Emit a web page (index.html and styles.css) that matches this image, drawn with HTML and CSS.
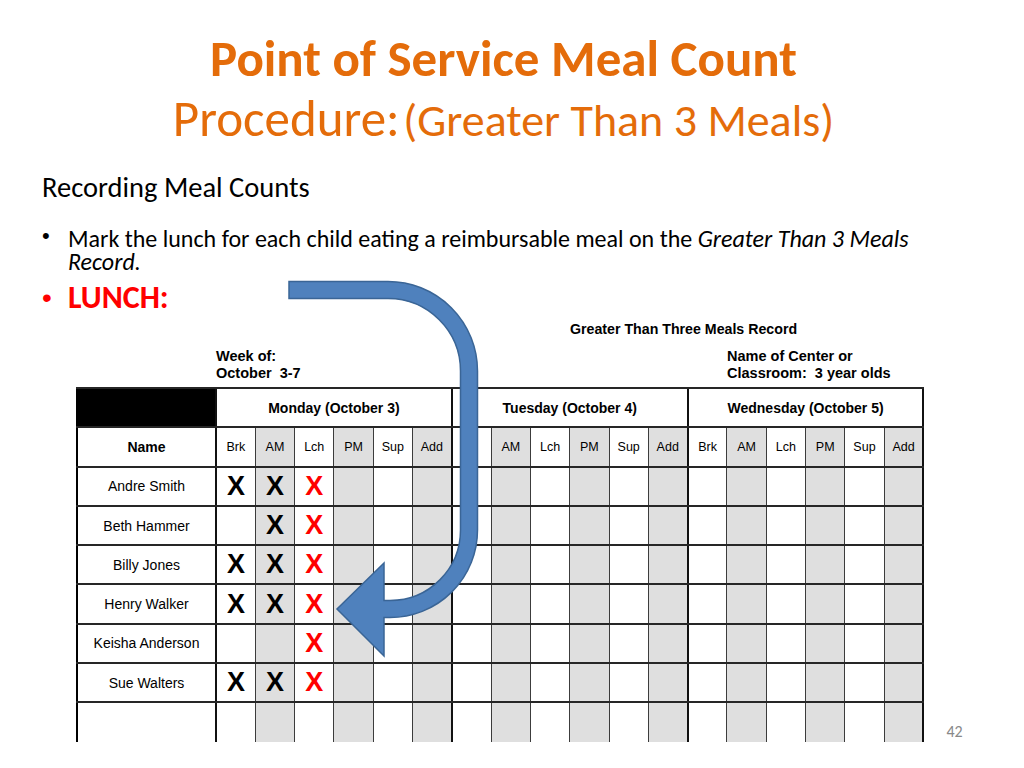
FILE: index.html
```html
<!DOCTYPE html>
<html>
<head>
<meta charset="utf-8">
<link rel="stylesheet" href="styles.css">
</head>
<body>
<div class="slide">
  <header class="title">
    <div class="t1">Point of Service Meal Count</div>
    <div class="t2"><span class="proc">Procedure:</span> <span class="sub">(Greater Than 3 Meals)</span></div>
  </header>
  <div class="content">
    <p class="lead">Recording Meal Counts</p>
    <ul class="bullets">
      <li class="b1"><span class="dot">•</span><span class="txt">Mark the lunch for each child eating a reimbursable meal on the <em>Greater Than 3 Meals</em> <em>Record.</em></span></li>
      <li class="b2"><span class="dot">•</span><span class="txt">LUNCH:</span></li>
    </ul>
  </div>
  <div class="record-row">
    <section class="record">
      <div class="rec-title">Greater Than Three Meals Record</div>
      <div class="rec-meta">
        <div class="week">Week of:<br>October&nbsp; 3-7</div>
        <div class="center">Name of Center or<br>Classroom:&nbsp; 3 year olds</div>
      </div>
      <table class="meals">
        <colgroup><col class="cn"></colgroup>
        <colgroup class="day"><col><col class="g"><col><col class="g"><col><col class="g"></colgroup>
        <colgroup class="day"><col><col class="g"><col><col class="g"><col><col class="g"></colgroup>
        <colgroup class="day"><col><col class="g"><col><col class="g"><col><col class="g"></colgroup>
        <thead>
          <tr class="days">
            <th class="blk"></th>
            <th colspan="6">Monday (October 3)</th>
            <th colspan="6">Tuesday (October 4)</th>
            <th colspan="6">Wednesday (October 5)</th>
          </tr>
          <tr class="meal-h">
            <th class="namehd">Name</th>
            <td>Brk</td><td>AM</td><td>Lch</td><td>PM</td><td>Sup</td><td>Add</td>
            <td></td><td>AM</td><td>Lch</td><td>PM</td><td>Sup</td><td>Add</td>
            <td>Brk</td><td>AM</td><td>Lch</td><td>PM</td><td>Sup</td><td>Add</td>
          </tr>
        </thead>
        <tbody>
          <tr>
            <td class="nm">Andre Smith</td>
            <td><span class="x">X</span></td><td><span class="x">X</span></td><td><span class="x r">X</span></td><td></td><td></td><td></td>
            <td></td><td></td><td></td><td></td><td></td><td></td>
            <td></td><td></td><td></td><td></td><td></td><td></td>
          </tr>
          <tr>
            <td class="nm">Beth Hammer</td>
            <td></td><td><span class="x">X</span></td><td><span class="x r">X</span></td><td></td><td></td><td></td>
            <td></td><td></td><td></td><td></td><td></td><td></td>
            <td></td><td></td><td></td><td></td><td></td><td></td>
          </tr>
          <tr>
            <td class="nm">Billy Jones</td>
            <td><span class="x">X</span></td><td><span class="x">X</span></td><td><span class="x r">X</span></td><td></td><td></td><td></td>
            <td></td><td></td><td></td><td></td><td></td><td></td>
            <td></td><td></td><td></td><td></td><td></td><td></td>
          </tr>
          <tr>
            <td class="nm">Henry Walker</td>
            <td><span class="x">X</span></td><td><span class="x">X</span></td><td><span class="x r">X</span></td><td></td><td></td><td></td>
            <td></td><td></td><td></td><td></td><td></td><td></td>
            <td></td><td></td><td></td><td></td><td></td><td></td>
          </tr>
          <tr>
            <td class="nm">Keisha Anderson</td>
            <td></td><td></td><td><span class="x r">X</span></td><td></td><td></td><td></td>
            <td></td><td></td><td></td><td></td><td></td><td></td>
            <td></td><td></td><td></td><td></td><td></td><td></td>
          </tr>
          <tr>
            <td class="nm">Sue Walters</td>
            <td><span class="x">X</span></td><td><span class="x">X</span></td><td><span class="x r">X</span></td><td></td><td></td><td></td>
            <td></td><td></td><td></td><td></td><td></td><td></td>
            <td></td><td></td><td></td><td></td><td></td><td></td>
          </tr>
          <tr class="last">
            <td class="nm"></td>
            <td></td><td></td><td></td><td></td><td></td><td></td>
            <td></td><td></td><td></td><td></td><td></td><td></td>
            <td></td><td></td><td></td><td></td><td></td><td></td>
          </tr>
        </tbody>
      </table>
    </section>
    <div class="pagenum">42</div>
  </div>
  <svg class="arrow" viewBox="0 0 1024 768" width="1024" height="768" aria-hidden="true">
    <path d="M289,281.5 L388,281.5 A89.5,89.5 0 0 1 477.5,371 L477.5,530 A87.5,87.5 0 0 1 390,617.5 L384,617.5 L384,656 L337,609 L384,563 L384,600.5 L390,600.5 A70.5,70.5 0 0 0 460.5,530 L460.5,371 A72.5,72.5 0 0 0 388,298.5 L289,298.5 Z" fill="#4f81bd" stroke="#3a6596" stroke-width="1.5" stroke-linejoin="miter"/>
  </svg>
</div>
</body>
</html>
```

FILE: styles.css
```css
html, body {
  margin: 0;
  padding: 0;
  background: #ffffff;
}

.slide {
  position: relative;
  width: 1024px;
  height: 768px;
  overflow: hidden;
  font-family: Carlito, Lato, "Open Sans", sans-serif;
  color: #000;
}

/* Title */
.title {
  padding: 29px 17px 0 0;
  text-align: center;
  color: #e46c0a;
}

.t1 {
  font-weight: bold;
  font-size: 51px;
  line-height: 60px;
}

.t2 {
  line-height: 60px;
  white-space: nowrap;
}

.proc {
  font-size: 51px;
}

.sub {
  font-size: 46px;
}

/* Body text */
.content {
  padding-left: 42px;
  margin-top: 10px;
}

.lead {
  margin: 0;
  font-size: 28.5px;
  line-height: 34px;
}

.bullets {
  list-style: none;
  margin: 22px 0 0 0;
  padding: 0;
}

.bullets li {
  display: flex;
}

.dot {
  flex: 0 0 26px;
  font-family: "Liberation Sans", Arial, sans-serif;
}

.b1 {
  font-size: 24px;
  line-height: 23px;
  width: 900px;
}

.b1 .dot {
  font-size: 22px;
  position: relative;
  top: -3px;
}

.b1 em {
  font-style: italic;
}

.b2 {
  margin-top: 6px;
  color: #ff0000;
  font-weight: bold;
  font-size: 32px;
  line-height: 38px;
}

.b2 .dot {
  font-size: 28px;
  font-weight: normal;
}

/* Record area */
.record-row {
  display: flex;
  align-items: flex-end;
  gap: 22px;
  padding-left: 76px;
  margin-top: 3px;
}

.record {
  font-family: "Liberation Sans Narrow", "Arial Narrow", "Liberation Sans", sans-serif;
  font-weight: bold;
}

.rec-title {
  margin-left: 494px;
  font-size: 14.2px;
  line-height: 18px;
}

.rec-meta {
  display: flex;
  margin: 10px 0 5px 140px;
  font-size: 14.5px;
  line-height: 17px;
}

.week {
  width: 511px;
}

/* Table */
.meals {
  border-collapse: collapse;
  table-layout: fixed;
  width: 846px;
  font-family: "Liberation Sans", Arial, sans-serif;
  font-weight: normal;
  border-left: 2px solid #000;
  border-top: 2px solid #111;
}

.meals col {
  width: 39.3px;
}

.meals col.cn {
  width: 139px;
}

.meals col.g {
  background: #dfdfdf;
}

.meals colgroup.day {
  border-left: 2px solid #111;
  border-right: 2px solid #111;
}

.meals th,
.meals td {
  padding: 0;
  text-align: center;
  vertical-align: middle;
  border-left: 1px solid #3c3c3c;
  border-right: 1px solid #3c3c3c;
  border-top: 2px solid #262626;
  border-bottom: 2px solid #262626;
  line-height: 1;
}

.meals tr {
  height: 39.3px;
}

.days th {
  background: #ffffff;
  font-size: 14px;
  font-weight: bold;
}

.days th.blk {
  background: #000000;
}

.meal-h td {
  font-size: 12.5px;
}

.namehd {
  font-size: 14px;
  font-weight: bold;
  background: #ffffff;
}

.nm {
  font-size: 14px;
}

.x {
  font-size: 27px;
  font-weight: bold;
  color: #000;
}

.x.r {
  color: #ff0000;
}

.meals tr.last td {
  border-bottom: none;
}

.pagenum {
  font-size: 16px;
  line-height: 20px;
  color: #898989;
  padding-bottom: 0;
}

/* Overlay arrow */
.arrow {
  position: absolute;
  top: 0;
  left: 0;
  pointer-events: none;
}
```
